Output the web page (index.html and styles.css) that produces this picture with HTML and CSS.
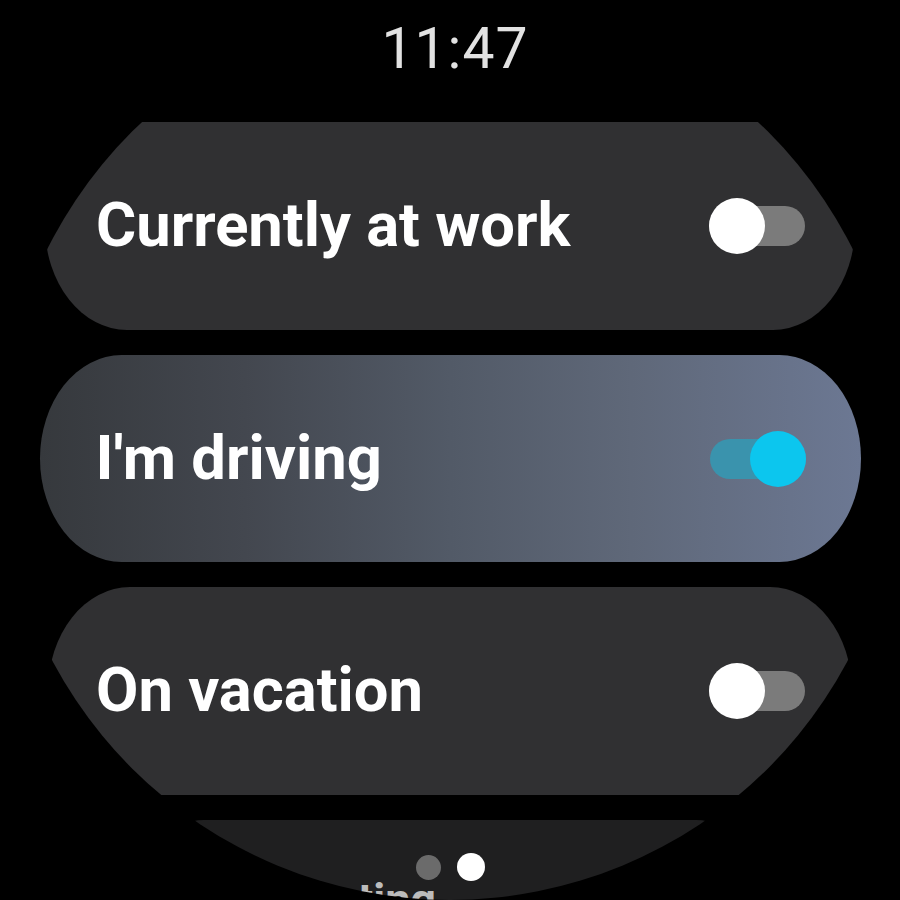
FILE: index.html
```html
<!DOCTYPE html>
<html lang="en">
<head>
<meta charset="utf-8">
<title>Modes</title>
<link rel="stylesheet" href="styles.css">
</head>
<body>
<div class="watch">
  <div class="time">11:47</div>
  <div class="list">
    <div class="card card-1">
      <span class="label">Currently at work</span>
      <span class="toggle"><span class="thumb"></span></span>
    </div>
    <div class="card card-2 active">
      <span class="label">I'm driving</span>
      <span class="toggle on"><span class="thumb"></span></span>
    </div>
    <div class="card card-3">
      <span class="label">On vacation</span>
      <span class="toggle"><span class="thumb"></span></span>
    </div>
    <div class="card card-4">
      <span class="label">Commuting</span>
    </div>
  </div>
  <div class="pager">
    <span class="dot"></span>
    <span class="dot current"></span>
  </div>
</div>
</body>
</html>
```

FILE: styles.css
```css
html, body {
  margin: 0;
  padding: 0;
  background: #000;
}

body {
  width: 900px;
  height: 900px;
  overflow: hidden;
  font-family: Roboto, "Noto Sans", "Liberation Sans", sans-serif;
}

.watch {
  position: relative;
  width: 900px;
  height: 900px;
  border-radius: 50%;
  overflow: hidden;
  background: #000;
  display: flex;
  flex-direction: column;
  align-items: center;
}

.time {
  margin-top: 21px;
  height: 56px;
  line-height: 56px;
  font-size: 57px;
  font-weight: 400;
  letter-spacing: 1px;
  color: #e2e2e2;
  padding-left: 10px;
}

.list {
  margin-top: 45px;
  width: 100%;
  display: flex;
  flex-direction: column;
  align-items: center;
  gap: 25px;
}

.card {
  box-sizing: border-box;
  height: 208px;
  flex: none;
  display: flex;
  align-items: center;
  justify-content: space-between;
  background: #303032;
  border-radius: 82px / 104px;
}

.card-1 {
  width: 810px;
  padding: 0 50px 0 51px;
}

.card-2 {
  width: 821px;
  height: 207px;
  padding: 0 55px 0 56px;
  background: linear-gradient(90deg, #36393d 0%, #43474f 25%, #525a67 50%, #5f6879 72%, #6c7893 100%);
}

.card-3 {
  width: 804px;
  padding: 0 47px 0 48px;
}

.card-4 {
  width: 616px;
  height: 156px;
  padding: 0 0 0 58px;
  background: #1f1f20;
  border-radius: 62px / 78px;
}

.label {
  font-size: 61.5px;
  line-height: 1;
  font-weight: 700;
  color: #ffffff;
  white-space: nowrap;
}

.card-4 .label {
  font-size: 45px;
  color: #bcbcbc;
  margin-top: 2px;
}

.toggle {
  position: relative;
  width: 96px;
  height: 40px;
  border-radius: 20px;
  background: #7b7b7b;
  display: flex;
  align-items: center;
  justify-content: flex-start;
}

.toggle .thumb {
  width: 56px;
  height: 56px;
  border-radius: 50%;
  background: #ffffff;
  flex: none;
}

.toggle.on {
  background: #3a93ad;
  justify-content: flex-end;
}

.toggle.on .thumb {
  background: #0cc6ee;
}

.pager {
  position: absolute;
  left: 416px;
  top: 853px;
  display: flex;
  align-items: center;
  gap: 16px;
}

.dot {
  width: 25px;
  height: 25px;
  border-radius: 50%;
  background: #6b6b6b;
}

.dot.current {
  width: 28px;
  height: 28px;
  background: #ffffff;
}
```
